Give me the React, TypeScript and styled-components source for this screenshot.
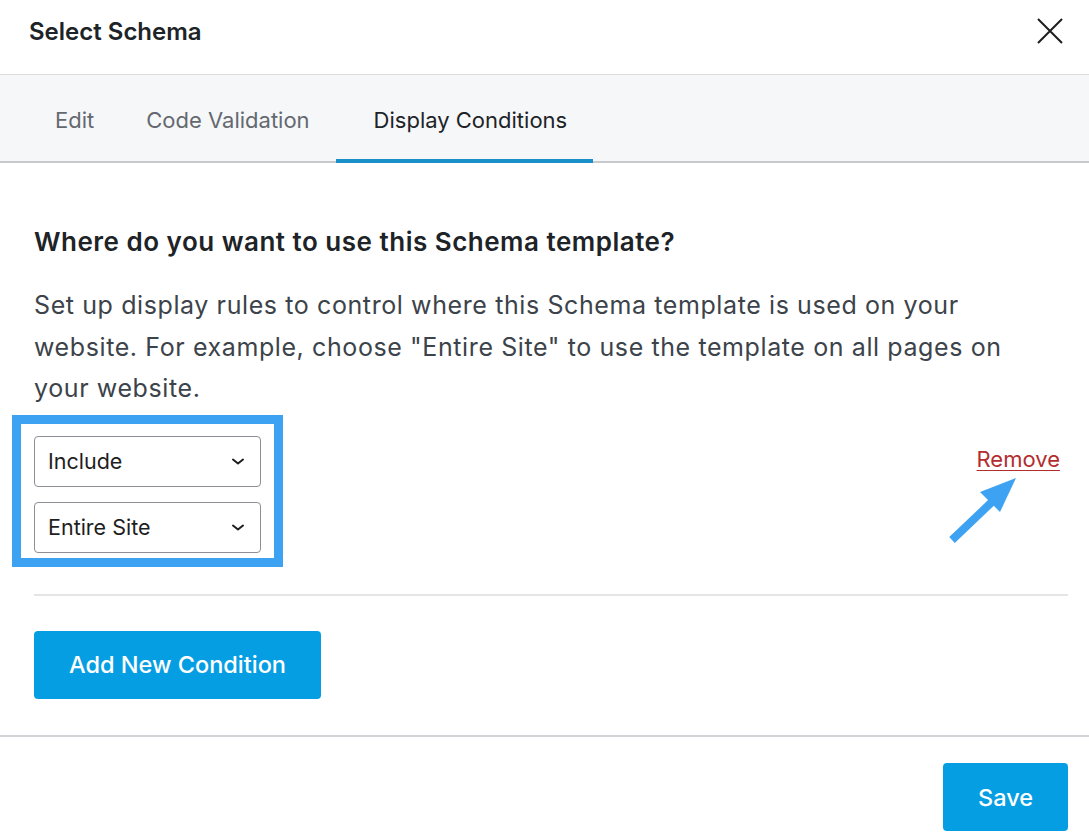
import React, { FC } from "react";
import styled, { createGlobalStyle } from "styled-components";

const BLUE = "#069ee3";
const TEXT_DARK = "#1d2327";

const GlobalStyle = createGlobalStyle`
  html, body {
    margin: 0;
    padding: 0;
    background: #ffffff;
  }
  body {
    font-family: Inter, "Noto Sans", "Liberation Sans", sans-serif;
    -webkit-font-smoothing: antialiased;
  }
  * {
    box-sizing: border-box;
  }
`;

const Modal = styled.div`
  width: 1089px;
  height: 837px;
  background: #ffffff;
  display: flex;
  flex-direction: column;
  overflow: hidden;
`;

const Header = styled.header`
  height: 75px;
  display: flex;
  align-items: center;
  justify-content: space-between;
  padding: 0 25px 12px 29px;
  border-bottom: 1px solid #dcdcde;
`;

const Title = styled.h1`
  margin: 0;
  font-size: 24px;
  font-weight: 600;
  color: ${TEXT_DARK};
`;

const CloseButton = styled.button`
  width: 28px;
  height: 28px;
  padding: 0;
  border: 0;
  background: none;
  display: flex;
  align-items: center;
  justify-content: center;
  cursor: pointer;
  color: #1e1e1e;
`;

const TabBar = styled.nav`
  height: 88px;
  display: flex;
  align-items: stretch;
  padding-left: 29px;
  background: #f6f7f9;
  border-bottom: 2px solid #c9cacd;
`;

const Tab = styled.button<{ $active?: boolean }>`
  position: relative;
  display: flex;
  align-items: center;
  padding: 4px 26px 0 ${(p) => (p.$active ? 38 : 26)}px;
  border: 0;
  background: none;
  font-family: inherit;
  font-size: 22px;
  font-weight: 400;
  color: ${(p) => (p.$active ? TEXT_DARK : "#646970")};
  cursor: pointer;

  &::after {
    content: "";
    position: absolute;
    left: 0;
    right: 0;
    bottom: -2px;
    height: 4px;
    background: ${(p) => (p.$active ? "#1a90c8" : "transparent")};
  }
`;

const Content = styled.section`
  flex: 1;
  padding: 64px 21px 0 34px;
  display: flex;
  flex-direction: column;
`;

const Heading = styled.h2`
  margin: 0;
  font-size: 26px;
  line-height: 30px;
  font-weight: 600;
  letter-spacing: 0.5px;
  color: ${TEXT_DARK};
`;

const Description = styled.p`
  margin: 28px 0 0;
  max-width: 990px;
  font-size: 25px;
  line-height: 41.5px;
  letter-spacing: 0.6px;
  color: #3c434a;
`;

const ConditionRow = styled.div`
  position: relative;
  margin-top: 26px;
  display: flex;
  justify-content: space-between;
  align-items: flex-start;
`;

const SelectGroup = styled.div`
  position: relative;
  display: flex;
  flex-direction: column;
  gap: 15px;
  width: 227px;

  /* screenshot highlight around the selects */
  &::before {
    content: "";
    position: absolute;
    top: -21px;
    left: -22px;
    right: -22px;
    bottom: -14px;
    border: 9px solid #3ea2f2;
    pointer-events: none;
  }
`;

const SelectBox = styled.div`
  height: 51px;
  display: flex;
  align-items: center;
  justify-content: space-between;
  padding: 0 15px 0 13px;
  border: 1px solid #8c8f94;
  border-radius: 4px;
  background: #ffffff;
  font-size: 21.5px;
  color: #1e1e1e;
`;

const RemoveLink = styled.a`
  margin: 10px 8px 0 0;
  font-size: 22px;
  color: #b32d2e;
  text-decoration: underline;
  text-underline-offset: 3px;
  text-decoration-thickness: 1px;
  cursor: pointer;
`;

const Arrow = styled.svg`
  position: absolute;
  right: 48px;
  top: 38px;
  pointer-events: none;
`;

const Divider = styled.hr`
  margin: 41px 0 0;
  border: 0;
  border-top: 2px solid #e4e5e7;
`;

const PrimaryButton = styled.button<{ $width: number }>`
  width: ${(p) => p.$width}px;
  height: 68px;
  border: 0;
  border-radius: 4px;
  background: ${BLUE};
  color: #ffffff;
  font-family: inherit;
  font-size: 23.5px;
  font-weight: 500;
  cursor: pointer;
`;

const AddRow = styled.div`
  margin-top: 35px;
`;

const Footer = styled.footer`
  height: 102px;
  border-top: 2px solid #d3d4d7;
  display: flex;
  justify-content: flex-end;
  padding: 26px 21px 0 0;
`;

const Chevron: FC = () => (
  <svg width="14" height="9" viewBox="0 0 14 9" fill="none">
    <path d="M2 2.5 L7 6.5 L12 2.5" stroke="#1e1e1e" strokeWidth="2" strokeLinecap="round" strokeLinejoin="round" />
  </svg>
);

const Select: FC<{ value: string }> = ({ value }) => (
  <SelectBox>
    <span>{value}</span>
    <Chevron />
  </SelectBox>
);

export default function App() {
  return (
    <>
      <GlobalStyle />
      <Modal>
        <Header>
          <Title>Select Schema</Title>
          <CloseButton aria-label="Close">
            <svg width="26" height="26" viewBox="0 0 26 26" fill="none">
              <path d="M1 1 L25 25 M25 1 L1 25" stroke="currentColor" strokeWidth="2" />
            </svg>
          </CloseButton>
        </Header>
        <TabBar>
          <Tab>Edit</Tab>
          <Tab>Code Validation</Tab>
          <Tab $active>Display Conditions</Tab>
        </TabBar>
        <Content>
          <Heading>Where do you want to use this Schema template?</Heading>
          <Description>
            Set up display rules to control where this Schema template is used on your website. For example, choose
            "Entire Site" to use the template on all pages on your website.
          </Description>
          <ConditionRow>
            <SelectGroup>
              <Select value="Include" />
              <Select value="Entire Site" />
            </SelectGroup>
            <RemoveLink>Remove</RemoveLink>
            <Arrow width="72" height="70" viewBox="0 0 72 70">
              <path d="M4 66 L46 26" stroke="#3ea2f2" strokeWidth="8" strokeLinecap="butt" />
              <polygon points="68,4 32,18 52,38" fill="#3ea2f2" />
            </Arrow>
          </ConditionRow>
          <Divider />
          <AddRow>
            <PrimaryButton $width={287}>Add New Condition</PrimaryButton>
          </AddRow>
        </Content>
        <Footer>
          <PrimaryButton $width={125}>Save</PrimaryButton>
        </Footer>
      </Modal>
    </>
  );
}
